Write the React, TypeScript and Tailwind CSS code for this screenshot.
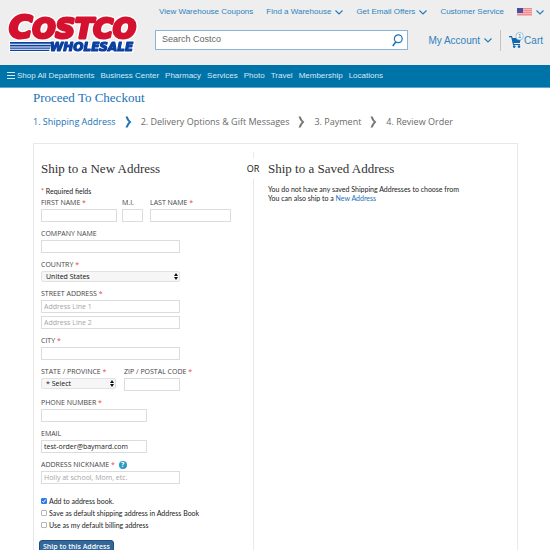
import type { ReactNode } from 'react'

const sans = "font-['Open_Sans','Noto_Sans',sans-serif]"
const lato = "font-['Lato','Open_Sans',sans-serif]"
const serif = "font-['Liberation_Serif',Georgia,serif]"
const helvetica = "font-['Liberation_Sans',Arial,sans-serif]"

const box =
  'block h-[13px] border border-[#dcdcdc] bg-white px-[2px] text-[7px] leading-none text-[#222] placeholder:text-[#a5a5a5] outline-none'

function ChevronDown() {
  return (
    <svg viewBox="0 0 8 5" className="h-[5px] w-2" fill="none" stroke="#1f7cba" strokeWidth="1.1">
      <path d="M0.5 0.5 4 4 7.5 0.5" />
    </svg>
  )
}

function StepArrow({ active = false }: { active?: boolean }) {
  return (
    <svg
      viewBox="0 0 7 12"
      className={`h-3 w-[7px] ${active ? 'text-[#1a72b8]' : 'text-[#777]'}`}
      fill="currentColor"
    >
      <path d="M0.5 0.5H2.6Q3.8 4 6.4 6 3.8 8 2.6 11.5H0.5Q1.5 8 3.8 6 1.5 4 0.5 0.5Z" />
    </svg>
  )
}

function Logo() {
  return (
    <svg
      viewBox="0 0 138 56"
      className="h-14 w-[138px] [filter:drop-shadow(1px_0_0_#fff)_drop-shadow(-1px_0_0_#fff)_drop-shadow(0_1px_0_#fff)_drop-shadow(0_-1px_0_#fff)]"
      role="img"
      aria-label="Costco Wholesale"
    >
      <g
        fontFamily="'DejaVu Sans', sans-serif"
        fontWeight="bold"
        fontStyle="italic"
        strokeLinejoin="round"
      >
        <text x="2" y="38" fontSize="27" fill="#d4122f" stroke="#d4122f" strokeWidth="3">
          <tspan fontSize="32">C</tspan>OSTCO
        </text>
        <text x="43" y="51" fontSize="12" fill="#0b3fa0" stroke="#0b3fa0" strokeWidth="1.2">
          WHOLESALE
        </text>
      </g>
      <path
        d="M3 42H45L44.4 43.8H3ZM3 44.8H44L43.6 46.4H3ZM3 47.4H43.4L43 48.8H3ZM3 49.8H42.6L42.2 51H3Z"
        fill="#0b3fa0"
      />
    </svg>
  )
}

function Flag() {
  return (
    <svg viewBox="0 0 15 8" className="h-2 w-[15px]">
      <path d="M0 0H15V8H0Z" fill="#f3b9bd" />
      <path d="M0 0H15V1H0ZM0 2H15V3H0ZM0 4H15V5H0ZM0 6H15V7H0Z" fill="#ef8a90" />
      <path d="M0 0H6V5H0Z" fill="#4b4f9c" />
    </svg>
  )
}

function CartIcon() {
  return (
    <svg viewBox="0 0 15 17" className="h-[17px] w-[15px]">
      <path d="M0 4H3L3.6 6H12L10.8 11H4.8L5 12H11V13H4L2.2 5.2H0Z" fill="#0f68ae" />
      <circle cx="5.2" cy="14.6" r="1.3" fill="#0f68ae" />
      <circle cx="10" cy="14.6" r="1.3" fill="#0f68ae" />
      <circle cx="10.6" cy="4.2" r="3.8" fill="#f4f4f4" stroke="#6ba6d0" strokeWidth="0.6" />
      <text x="9" y="6.4" fontSize="6" fill="#1f7cba" fontFamily="'Liberation Sans', sans-serif">
        1
      </text>
    </svg>
  )
}

function Field({
  id,
  label,
  required,
  extra,
  children,
}: {
  id: string
  label: string
  required?: boolean
  extra?: ReactNode
  children: ReactNode
}) {
  return (
    <div>
      <div className="flex h-3 items-center gap-1">
        <label htmlFor={id} className="whitespace-nowrap text-[7px] leading-3 text-[#444]">
          {label}
          {required && <span className="text-[#f0433a]"> *</span>}
        </label>
        {extra}
      </div>
      {children}
    </div>
  )
}

function Select({ id, value, className }: { id: string; value: string; className: string }) {
  return (
    <div className={`relative ${className}`}>
      <select
        id={id}
        className="block h-[11px] w-full appearance-none rounded-[2px] border border-[#e2e2e2] bg-[#f6f6f6] px-1 text-[7px] leading-none text-[#111]"
      >
        <option>{value}</option>
      </select>
      <svg viewBox="0 0 4 7" className="pointer-events-none absolute top-[2px] right-[2px] h-[7px] w-1">
        <path d="M2 0 4 3H0ZM2 7 0 4H4Z" fill="#111" />
      </svg>
    </div>
  )
}

function Tick({ id, label, checked }: { id: string; label: string; checked?: boolean }) {
  return (
    <div className="flex h-3 items-center gap-[2px]">
      <span className="relative block size-[6px]">
        <input
          id={id}
          type="checkbox"
          defaultChecked={checked}
          className="peer block size-[6px] appearance-none rounded-[1px] border border-[#b5b5b5] bg-white checked:border-[#2a7de8] checked:bg-[#2a7de8]"
        />
        <svg
          viewBox="0 0 6 6"
          className="pointer-events-none absolute inset-0 hidden size-[6px] peer-checked:block"
          fill="none"
          stroke="#fff"
        >
          <path d="M1.3 3.2 2.5 4.4 4.7 1.5" />
        </svg>
      </span>
      <label htmlFor={id} className={`text-[7px] leading-3 text-[#222] ${lato}`}>
        {label}
      </label>
    </div>
  )
}

function Header() {
  return (
    <header className={`flex h-[65px] bg-[#eee] pl-[7px] text-[#2f83bd] ${helvetica}`}>
      <a href="#" className="shrink-0">
        <Logo />
      </a>
      <div className="flex grow flex-col pl-[10px]">
        <div className="flex h-6 items-center justify-between pr-[6px] pl-1 text-[8px] whitespace-nowrap">
          <a href="#">View Warehouse Coupons</a>
          <a href="#" className="flex items-center gap-1">
            Find a Warehouse <ChevronDown />
          </a>
          <a href="#" className="flex items-center gap-1">
            Get Email Offers <ChevronDown />
          </a>
          <a href="#">Customer Service</a>
          <button className="flex items-center gap-1" aria-label="Country">
            <Flag />
            <ChevronDown />
          </button>
        </div>
        <div className="mt-[6px] flex h-5 items-center pr-[7px] text-[10px]">
          <div className="flex h-5 grow items-center border border-[#8db4d3] bg-white pr-1 pl-[6px]">
            <input
              aria-label="Search Costco"
              placeholder="Search Costco"
              className="w-full min-w-0 text-[9px] outline-none placeholder:text-[#666]"
            />
            <button aria-label="Search">
              <svg viewBox="0 0 11 13" className="h-[13px] w-[11px]" fill="none" stroke="#1873b8">
                <circle cx="6.3" cy="4.8" r="3.9" strokeWidth="1.2" />
                <path d="M3.8 7.9 0.8 12" strokeWidth="1.6" />
              </svg>
            </button>
          </div>
          <a href="#" className="ml-5 flex items-center gap-1 whitespace-nowrap">
            My Account <ChevronDown />
          </a>
          <a href="#" className="ml-2 flex h-[21px] items-center border-l border-[#c4c4c4] pl-2">
            <CartIcon />
            <span>Cart</span>
          </a>
        </div>
      </div>
    </header>
  )
}

function NavBar() {
  const items = [
    'Business Center',
    'Pharmacy',
    'Services',
    'Photo',
    'Travel',
    'Membership',
    'Locations',
  ]
  return (
    <nav
      className={`flex h-[23px] items-center gap-[6px] border-b border-[#5ea8cb] bg-[#0073a9] px-[7px] text-[8px] whitespace-nowrap text-[#d6e9f3] ${helvetica}`}
    >
      <a href="#" className="flex items-center gap-[2px]">
        <svg viewBox="0 0 8 8" className="size-2" stroke="#d6e9f3">
          <path d="M0 0.5H8M0 3.5H8M0 6.5H8" />
        </svg>
        Shop All Departments
      </a>
      {items.map((item) => (
        <a key={item} href="#">
          {item}
        </a>
      ))}
    </nav>
  )
}

export default function App() {
  return (
    <div className={`min-h-screen bg-white ${sans}`}>
      <Header />
      <NavBar />
      <main className="mx-8 pl-px">
        <h1 className={`h-5 text-[13px] leading-5 text-[#1a72b8] ${serif}`}>Proceed To Checkout</h1>
        <ol className="mt-2 flex h-3 items-center gap-[9px] text-[9px] whitespace-nowrap text-[#6a6a6a]">
          <li className="text-[#1a72b8]">1. Shipping Address</li>
          <StepArrow active />
          <li>2. Delivery Options &amp; Gift Messages</li>
          <StepArrow />
          <li>3. Payment</li>
          <StepArrow />
          <li>4. Review Order</li>
        </ol>
        <div className="mt-[15px] flex border border-[#e8e8e8] pt-2">
          <form className="w-[212px] shrink-0 pt-[9px] pl-[7px]">
            <h2 className={`h-4 text-[13px] leading-4 text-[#333] ${serif}`}>
              Ship to a New Address
            </h2>
            <p className={`mt-2 h-3 text-[7px] leading-3 text-[#222] ${lato}`}>
              <span className="text-[#f0433a]">*</span> Required fields
            </p>
            <div className="flex flex-col gap-[6px]">
              <div className="flex">
                <Field id="first" label="FIRST NAME" required>
                  <input id="first" className={`${box} mr-[5px] w-[76px]`} />
                </Field>
                <Field id="mi" label="M.I.">
                  <input id="mi" className={`${box} mr-[7px] w-[21px]`} />
                </Field>
                <Field id="last" label="LAST NAME" required>
                  <input id="last" className={`${box} w-[81px]`} />
                </Field>
              </div>
              <Field id="company" label="COMPANY NAME">
                <input id="company" className={`${box} w-[139px]`} />
              </Field>
              <Field id="country" label="COUNTRY" required>
                <Select id="country" value="United States" className="w-[139px]" />
              </Field>
              <Field id="street" label="STREET ADDRESS" required>
                <input id="street" placeholder="Address Line 1" className={`${box} w-[139px]`} />
                <input
                  aria-label="Address Line 2"
                  placeholder="Address Line 2"
                  className={`${box} mt-[3px] w-[139px]`}
                />
              </Field>
              <Field id="city" label="CITY" required>
                <input id="city" className={`${box} w-[139px]`} />
              </Field>
              <div className="flex gap-2">
                <Field id="state" label="STATE / PROVINCE" required>
                  <Select id="state" value="* Select" className="w-[75px]" />
                </Field>
                <Field id="zip" label="ZIP / POSTAL CODE" required>
                  <input id="zip" className={`${box} w-14`} />
                </Field>
              </div>
              <Field id="phone" label="PHONE NUMBER" required>
                <input id="phone" className={`${box} w-[106px]`} />
              </Field>
              <Field id="email" label="EMAIL">
                <input
                  id="email"
                  defaultValue="test-order@baymard.com"
                  className={`${box} w-[106px]`}
                />
              </Field>
              <Field
                id="nickname"
                label="ADDRESS NICKNAME"
                required
                extra={
                  <button
                    type="button"
                    className="size-2 rounded-full bg-[#2a9ac4] text-center text-[7px] leading-2 font-bold text-white"
                  >
                    ?
                  </button>
                }
              >
                <input
                  id="nickname"
                  placeholder="Holly at school, Mom, etc."
                  className={`${box} w-[139px]`}
                />
              </Field>
            </div>
            <div className="mt-[11px]">
              <Tick id="book" label="Add to address book." checked />
              <Tick id="ship" label="Save as default shipping address in Address Book" />
              <Tick id="bill" label="Use as my default billing address" />
            </div>
            <button
              type="button"
              className="mt-2 -ml-[2px] h-[14px] rounded-[3px] border border-[#1f4f7c] bg-[#336699] px-[3px] text-[7px] leading-none font-semibold text-white"
            >
              Ship to this Address
            </button>
          </form>
          <div className="flex w-[14px] shrink-0 flex-col items-center text-[9px] leading-none text-[#111]">
            <span className="h-[6px] w-px bg-[#e8e8e8]" />
            <span className="py-[6px]">OR</span>
            <span className="w-px grow bg-[#e8e8e8]" />
          </div>
          <section className="grow pt-[9px] pl-2">
            <h2 className={`h-4 text-[13px] leading-4 text-[#333] ${serif}`}>
              Ship to a Saved Address
            </h2>
            <p className={`mt-2 text-[7px] leading-[9px] text-[#222] ${lato}`}>
              You do not have any saved Shipping Addresses to choose from
              <br />
              You can also ship to a{' '}
              <a href="#" className="text-[#1a72b8]">
                New Address
              </a>
            </p>
          </section>
        </div>
      </main>
    </div>
  )
}
